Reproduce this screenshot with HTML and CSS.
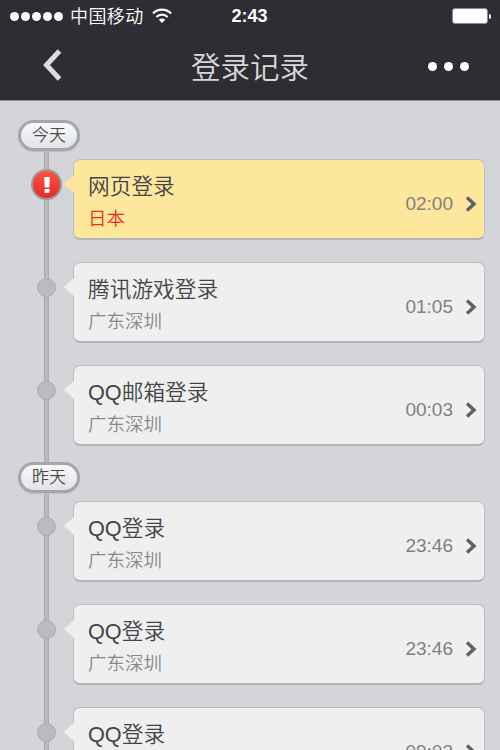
FILE: index.html
```
<!DOCTYPE html>
<html lang="zh-CN">
<head>
  <meta charset="UTF-8">
  <title>登录记录</title>
  <link rel="stylesheet" href="styles.css">
</head>
<body>

  <header>
    <div class="status-bar">
      <div class="carrier">
        <span class="signal"><i></i><i></i><i></i><i></i><i></i></span>
        <span class="carrier-name">中国移动</span>
        <svg class="wifi" width="20" height="16" viewBox="0 0 20 16" fill="none" stroke="#fff" stroke-width="2.2">
          <path d="M1 5.5a12.6 12.6 0 0 1 18 0"/>
          <path d="M4.3 9a8.2 8.2 0 0 1 11.4 0"/>
          <path d="M10 15l-3.2-3.2a4.6 4.6 0 0 1 6.4 0z" fill="#fff" stroke="none"/>
        </svg>
      </div>
      <span class="clock">2:43</span>
      <div class="battery"><span></span></div>
    </div>
    <nav>
      <a class="back">
        <svg width="20" height="32" viewBox="0 0 20 32" fill="none" stroke="#dcdcde" stroke-width="5">
          <path d="M17.500 2L4.500 16l13 14"/>
        </svg>
      </a>
      <h1>登录记录</h1>
      <a class="more"><i></i><i></i><i></i></a>
    </nav>
  </header>

  <main class="timeline">
    <h2 class="day">今天</h2>
    <div class="entry warning">
      <span class="alert">
        <svg width="8" height="18" viewBox="0 0 8 18" fill="#fff">
          <path d="M1.200 1h5.600l-.5 10.500H1.700z"/>
          <path d="M1.500 13h5v4h-5z"/>
        </svg>
      </span>
      <div class="card">
        <div class="info">
          <h3>网页登录</h3>
          <p>日本</p>
        </div>
        <time>02:00</time>
        <svg class="arrow" width="12" height="16" viewBox="0 0 12 16"><path d="M2 1.500l7 6.500-7 6.500"/></svg>
      </div>
    </div>
    <div class="entry">
      <span class="dot"></span>
      <div class="card">
        <div class="info">
          <h3>腾讯游戏登录</h3>
          <p>广东深圳</p>
        </div>
        <time>01:05</time>
        <svg class="arrow" width="12" height="16" viewBox="0 0 12 16"><path d="M2 1.500l7 6.500-7 6.500"/></svg>
      </div>
    </div>
    <div class="entry">
      <span class="dot"></span>
      <div class="card">
        <div class="info">
          <h3>QQ邮箱登录</h3>
          <p>广东深圳</p>
        </div>
        <time>00:03</time>
        <svg class="arrow" width="12" height="16" viewBox="0 0 12 16"><path d="M2 1.500l7 6.500-7 6.500"/></svg>
      </div>
    </div>

    <h2 class="day">昨天</h2>
    <div class="entry">
      <span class="dot"></span>
      <div class="card">
        <div class="info">
          <h3>QQ登录</h3>
          <p>广东深圳</p>
        </div>
        <time>23:46</time>
        <svg class="arrow" width="12" height="16" viewBox="0 0 12 16"><path d="M2 1.500l7 6.500-7 6.500"/></svg>
      </div>
    </div>
    <div class="entry">
      <span class="dot"></span>
      <div class="card">
        <div class="info">
          <h3>QQ登录</h3>
          <p>广东深圳</p>
        </div>
        <time>23:46</time>
        <svg class="arrow" width="12" height="16" viewBox="0 0 12 16"><path d="M2 1.500l7 6.500-7 6.500"/></svg>
      </div>
    </div>
    <div class="entry">
      <span class="dot"></span>
      <div class="card">
        <div class="info">
          <h3>QQ登录</h3>
        </div>
        <time>09:03</time>
        <svg class="arrow" width="12" height="16" viewBox="0 0 12 16"><path d="M2 1.500l7 6.500-7 6.500"/></svg>
      </div>
    </div>
  </main>

</body>
</html>
```
FILE: styles.css
```
* {
  box-sizing: border-box;
}
body {
  margin: 0;
  height: 750px;
  overflow: hidden;
  display: flex;
  flex-direction: column;
  background-color: #d3d5d8;
  font-family: "Liberation Sans", "Noto Sans CJK SC", sans-serif;
}
h1, h2, h3, p {
  margin: 0;
  font-weight: 350;
}
header {
  flex: none;
  height: 101px;
  background-color: #2e2d33;
  border-bottom: 1px solid #929297;
  color: #fff;
}

/* status bar */
.status-bar {
  display: grid;
  grid-template-columns: 1fr auto 1fr;
  align-items: center;
  height: 32px;
  padding: 0 9px 0 10px;
}
.carrier {
  display: flex;
  align-items: center;
}
.signal {
  display: flex;
  gap: 2px;
}
.signal i {
  width: 9px;
  height: 9px;
  border-radius: 50%;
  background-color: #fff;
}
.carrier-name {
  margin: 0 8px 0 7px;
  font-family: "Noto Sans CJK SC", sans-serif;
  font-weight: 350;
  font-size: 18px;
  letter-spacing: 0.4px;
  line-height: 30px;
  padding-bottom: 2px;
}
.clock {
  margin-right: 2px;
  font-size: 18px;
  font-weight: bold;
}
.battery {
  justify-self: end;
  display: flex;
  align-items: center;
}
.battery span {
  width: 36px;
  height: 16px;
  border: 1px solid #8a8a8e;
  border-radius: 3px;
  background-color: #fff;
}
.battery::after {
  content: "";
  width: 2px;
  height: 5px;
  margin-left: 1px;
  border-radius: 0 2px 2px 0;
  background-color: #fff;
}

/* title bar */
nav {
  display: grid;
  grid-template-columns: 1fr auto 1fr;
  align-items: center;
  height: 66px;
  padding: 0 32px 0 42px;
}
.back svg {
  display: block;
}
h1 {
  margin-right: 10px;
  color: #d8d8da;
  font-family: "Noto Sans CJK SC", sans-serif;
  font-size: 29.500px;
  line-height: 66px;
}
.more {
  justify-self: end;
  display: flex;
  gap: 8px;
  padding-top: 2px;
}
.more i {
  width: 9px;
  height: 9px;
  margin: 0 -0.5px;
  border-radius: 50%;
  background-color: #fff;
}

/* timeline, the rail is the background */
.timeline {
  flex: 1;
  min-height: 0;
  overflow: hidden;
  padding: 19px 15px 0 18px;
  background: linear-gradient(90deg, #a7a9ac 1px, #b7b9bb 1px, #b7b9bb 4px, #aaacae 4px) 44px 40px / 5px 100% no-repeat;
}
.day {
  width: 62px;
  height: 31px;
  margin-bottom: 8px;
  border: 3px solid #a5a6a9;
  border-radius: 16px;
  background-image: linear-gradient(#fbfbfc, #dfe1e6);
  background-origin: border-box;
  box-shadow: 0 1px 1px #c0c1c4;
  color: #4a4a4c;
  font-size: 17px;
  line-height: 25px;
  text-align: center;
}
.entry {
  display: grid;
  grid-template-columns: 57px 1fr;
  align-items: start;
  margin-bottom: 22px;
  margin-left: -2px;
}
.entry + .day {
  margin-top: -6px;
}
.dot {
  width: 19px;
  height: 19px;
  margin: 16px 0 0 21px;
  border: 1px solid #a9abae;
  border-radius: 50%;
  background-color: #b9bbbd;
}
.alert {
  display: flex;
  align-items: center;
  justify-content: center;
  width: 31px;
  height: 31px;
  margin: 10px 0 0 15px;
  border: 2px solid #a09597;
  border-radius: 50%;
  background-image: linear-gradient(#fb5448, #e82a20);
}
.card {
  position: relative;
  display: flex;
  align-items: center;
  height: 81px;
  padding: 0 7px 0 14px;
  border: 1px solid #bbbdc0;
  border-bottom: 2px solid #b2b4b7;
  border-radius: 7px;
  background-color: #efeff0;
}
/* pointer towards the rail */
.card::before {
  content: "";
  position: absolute;
  top: 14px;
  left: -10px;
  width: 11px;
  height: 20px;
  background-color: inherit;
  clip-path: polygon(100% 0, 0 50%, 100% 100%);
}
.info {
  flex: 1;
  align-self: flex-start;
  padding-top: 11px;
}
h3 {
  color: #444446;
  font-size: 21.700px;
  line-height: 32px;
}
.info p {
  color: #87888b;
  font-size: 18.500px;
  line-height: 32px;
}
time {
  margin: 9px 12px 0 0;
  color: #808083;
  font-size: 19px;
}
.arrow {
  margin-top: 9px;
  fill: none;
  stroke: #606164;
  stroke-width: 3.4;
}
.warning .card {
  background-color: #fde79d;
}
.warning p {
  color: #f22c1c;
}
```
